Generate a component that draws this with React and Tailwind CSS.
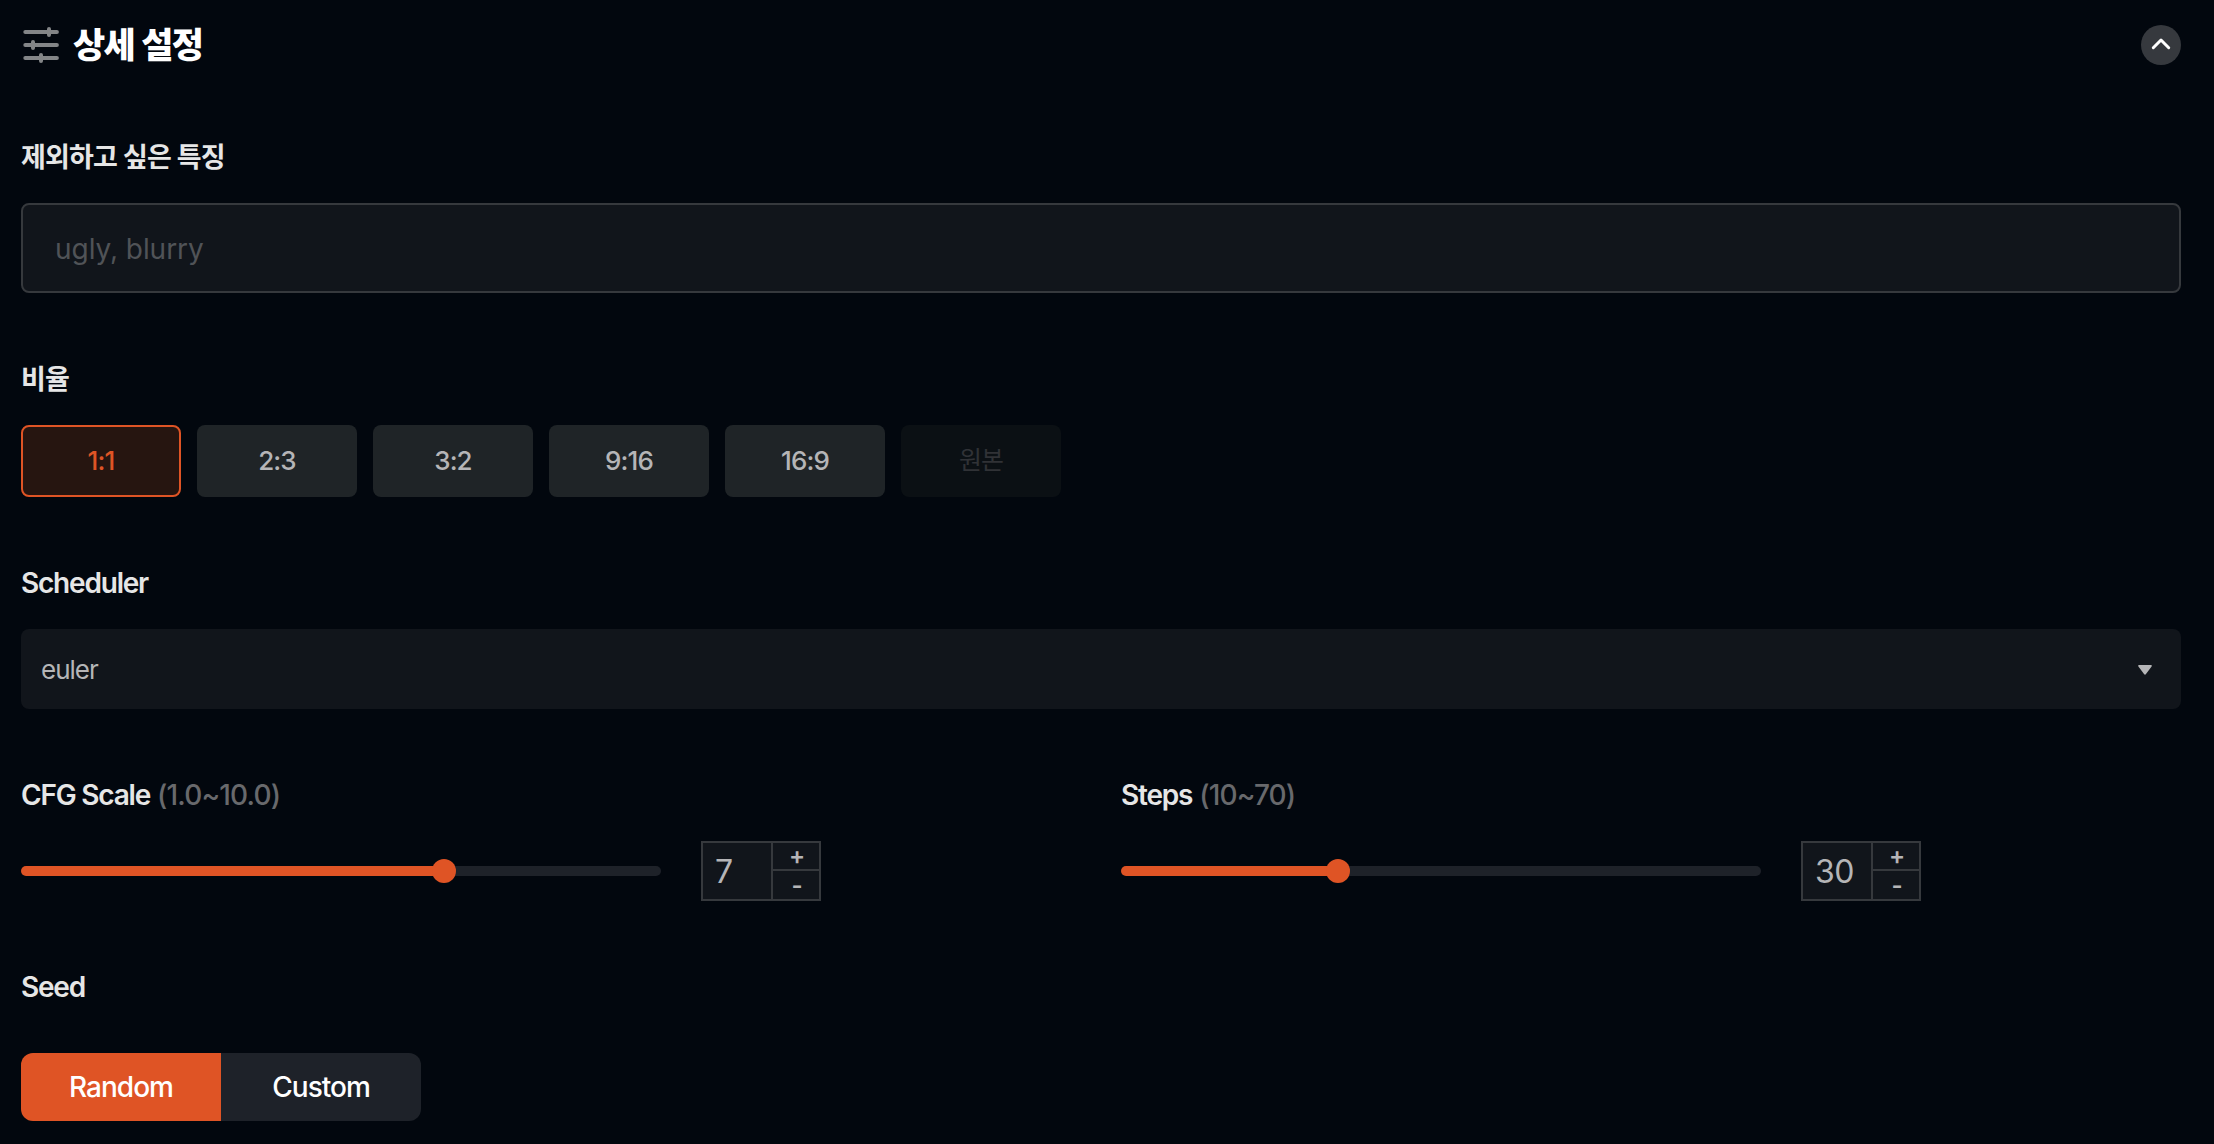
import React, { useState } from "react";

const RATIOS = ["1:1", "2:3", "3:2", "9:16", "16:9", "원본"];

function Label({ children, hint }) {
  return (
    <div className="h-10 leading-10 text-[28px] font-semibold tracking-[-1.2px] text-[#e6e6e6] whitespace-nowrap">
      {children}
      {hint && (
        <span className="ml-[7px] font-medium tracking-[-0.84px] text-[#68696c]">
          {hint}
        </span>
      )}
    </div>
  );
}

function NumberSlider({ label, hint, min, max, initial }) {
  const [value, setValue] = useState(initial);
  const ratio = (value - min) / (max - min);

  // Keep the value inside the allowed range
  const step = (amount) =>
    setValue(Math.min(max, Math.max(min, value + amount)));

  return (
    <div>
      <Label hint={hint}>{label}</Label>
      <div className="mt-[26px] flex h-[60px] items-center gap-10">
        <div className="flex h-6 w-[640px] items-center rounded-full">
          <div
            className="h-[10px] rounded-l-full bg-[#df5425]"
            style={{ width: `${ratio * 616 + 12}px` }}
          ></div>
          <div className="-mx-3 z-10 size-6 shrink-0 rounded-full bg-[#df5425]"></div>
          <div className="h-[10px] flex-1 rounded-r-full bg-[#1e2229]"></div>
        </div>
        <div className="flex h-[60px] w-[120px] border-2 border-[#36393d] bg-[#11151b] text-[#b5b5b7]">
          <div className="w-[68px] pl-3 text-[32px] leading-[57px] tracking-[-0.6px]">
            {value}
          </div>
          <div className="flex flex-1 flex-col border-l-2 border-[#36393d] text-[24px] font-semibold">
            <button
              className="flex h-7 items-center justify-center border-b-2 border-[#36393d] pl-0.5 leading-none"
              onClick={() => step(1)}
            >
              +
            </button>
            <button
              className="flex h-7 items-center justify-center pt-0.5 pl-0.5 leading-none"
              onClick={() => step(-1)}
            >
              -
            </button>
          </div>
        </div>
      </div>
    </div>
  );
}

function App() {
  const [ratio, setRatio] = useState("1:1");
  const [seed, setSeed] = useState("Random");

  return (
    <div className="h-[1144px] overflow-hidden bg-[#02070e] pt-[25px] pr-[33px] pl-[21px] font-['Inter','Noto_Sans_CJK_KR',sans-serif]">
      {/* Header */}
      <div className="flex h-10 items-center justify-between">
        <div className="flex items-center gap-3">
          <svg
            className="size-10"
            viewBox="0 0 40 40"
            fill="none"
            stroke="#838587"
            strokeWidth="4"
            strokeLinecap="round"
          >
            <path d="M4.3 7h31.6M4.3 20h31.6M4.3 33h31.6M28 4v6M12 17v6M20 30v6" />
          </svg>
          <h2 className="text-[35px] leading-10 font-extrabold tracking-[-1.6px] [word-spacing:1px] text-white">
            상세 설정
          </h2>
        </div>
        <button className="flex size-10 items-center justify-center rounded-full bg-[#36393e]">
          <svg
            className="size-10"
            viewBox="0 0 40 40"
            fill="none"
            stroke="#fff"
            strokeWidth="3"
            strokeLinecap="round"
            strokeLinejoin="round"
          >
            <path d="M12.3 22.7L20 15l7.7 7.7" />
          </svg>
        </button>
      </div>

      {/* Negative prompt */}
      <div className="mt-[72px]">
        <Label>
          <span className="text-[27px] leading-[42px] tracking-[-0.85px]">
            제외하고 싶은 특징
          </span>
        </Label>
        <input
          type="text"
          placeholder="ugly, blurry"
          className="mt-[26px] block h-[90px] w-full rounded-lg border-2 border-[#36393d] bg-[#11151b] px-8 pt-0.5 text-[28px] tracking-[-0.05px] text-[#b5b5b7] outline-none placeholder:text-[#505357]"
        />
      </div>

      {/* Ratio */}
      <div className="mt-[66px]">
        <Label>
          <span className="text-[27px] leading-[42px] tracking-[-0.85px]">
            비율
          </span>
        </Label>
        <div className="mt-[26px] flex gap-4">
          {RATIOS.map((item) => (
            <button
              key={item}
              disabled={item === "원본"}
              onClick={() => setRatio(item)}
              className={`flex h-[72px] w-40 items-center justify-center rounded-lg pb-0.5 text-[26px] font-medium tracking-[-0.9px] ${
                item === ratio
                  ? "border-2 border-[#df5425] bg-[#261510] text-[#df5425]"
                  : "bg-[#1f2427] text-[#b5b5b7] disabled:bg-[#0b1014] disabled:pb-0 disabled:text-[25px] disabled:font-normal disabled:text-[#303236]"
              }`}
            >
              {item}
            </button>
          ))}
        </div>
      </div>

      {/* Scheduler */}
      <div className="mt-[66px]">
        <Label>Scheduler</Label>
        <button className="mt-[26px] flex h-20 w-full items-center justify-between rounded-lg bg-[#11151b] pr-[29px] pl-5 text-[26px] tracking-[-1px] text-[#b5b5b7]">
          euler
          <svg
            className="mt-0.5 h-[10px] w-[14px]"
            viewBox="0 0 14 10"
            fill="#b5b5b7"
          >
            <path d="M1 0h12q1.3.4.6 1.6L8 9q-1 1.6-2 0L.4 1.6Q-.3.4 1 0z" />
          </svg>
        </button>
      </div>

      {/* Sliders */}
      <div className="mt-[66px] grid grid-cols-2 gap-10">
        <NumberSlider
          label="CFG Scale"
          hint="(1.0~10.0)"
          min={1}
          max={10}
          initial={7}
        />
        <NumberSlider
          label="Steps"
          hint="(10~70)"
          min={10}
          max={70}
          initial={30}
        />
      </div>

      {/* Seed */}
      <div className="mt-[66px]">
        <Label>Seed</Label>
        <div className="mt-[46px] flex h-[68px] w-[400px] overflow-hidden rounded-xl">
          {["Random", "Custom"].map((item) => (
            <button
              key={item}
              onClick={() => setSeed(item)}
              className={`flex-1 text-[28px] font-medium tracking-[-1px] text-white ${
                item === seed ? "bg-[#df5425]" : "bg-[#1e2229]"
              }`}
            >
              {item}
            </button>
          ))}
        </div>
      </div>
    </div>
  );
}

export default App;
